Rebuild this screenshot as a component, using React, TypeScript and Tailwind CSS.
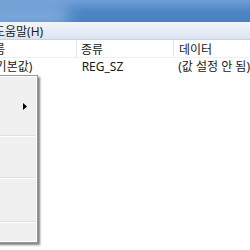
import React from 'react';

const font = { fontFamily: '"Noto Sans", "Noto Sans CJK KR", sans-serif' };

// submenu arrow in the context menu
const Arrow = () => (
  <svg width="4" height="7" viewBox="0 0 4 7" className="block">
    <path d="M0 0 L4 3.5 L0 7 Z" fill="#000" />
  </svg>
);

const Separator = () => (
  <div className="flex flex-col">
    <div className="h-px bg-[#e0e0e0]" />
    <div className="h-px bg-white" />
  </div>
);

const ContextMenu = () => (
  <div className="absolute left-[-160px] top-[75px] w-[198px] h-[168px] border border-[#979797] bg-[#f0f0f0] shadow-[2px_2px_2px_rgba(0,0,0,0.5)]">
    <div className="h-full border border-white flex flex-col pt-[1px] pr-[1px]">
      <div className="h-[57px] flex items-start justify-end pr-[8px] pt-[25px]">
        <Arrow />
      </div>
      <Separator />
      <div className="h-[40px]" />
      <Separator />
      <div className="h-[42px]" />
      <Separator />
      <div className="flex-1" />
    </div>
  </div>
);

const App: React.FC = () => {
  return (
    <div className="w-[250px] h-[250px] overflow-hidden relative bg-white text-[12px] text-[#1a1a1a]" style={font}>
      {/* title bar */}
      <div className="h-[22px] bg-gradient-to-b from-[#6f9fd6] via-[#4f86c6] to-[#4880c2] relative overflow-hidden">
        <div className="absolute left-[-20px] top-[6px] w-[90px] h-[20px] rounded-full bg-[#9cc0e8] blur-[8px] opacity-70" />
      </div>

      {/* menu bar */}
      <div className="h-[18px] bg-gradient-to-b from-[#f3f6fb] to-[#dbe4f1] border-b border-[#c5d2e4] flex items-center">
        <span className="ml-[-6px] pt-[2px] leading-none">도움말(H)</span>
      </div>

      {/* list header */}
      <div className="h-[18px] flex items-center border-b border-[#eef0f3]">
        <div className="w-[77px] h-full flex items-center border-r border-[#e3e6ea]">
          <span className="ml-[-17px] pt-[3px] leading-none">이름</span>
        </div>
        <div className="w-[97px] h-full flex items-center border-r border-[#e3e6ea] pl-[4px]">
          <span className="pt-[3px] leading-none">종류</span>
        </div>
        <div className="flex-1 h-full flex items-center pl-[5px]">
          <span className="pt-[3px] leading-none">데이터</span>
        </div>
      </div>

      {/* value row */}
      <div className="h-[17px] flex items-center">
        <div className="w-[77px]">
          <span className="ml-[-8px] leading-none">(기본값)</span>
        </div>
        <div className="w-[97px] pl-[5px] leading-none">REG_SZ</div>
        <div className="flex-1 pl-[5px] leading-none whitespace-nowrap">(값 설정 안 됨)</div>
      </div>

      <ContextMenu />
    </div>
  );
};

export default App;
